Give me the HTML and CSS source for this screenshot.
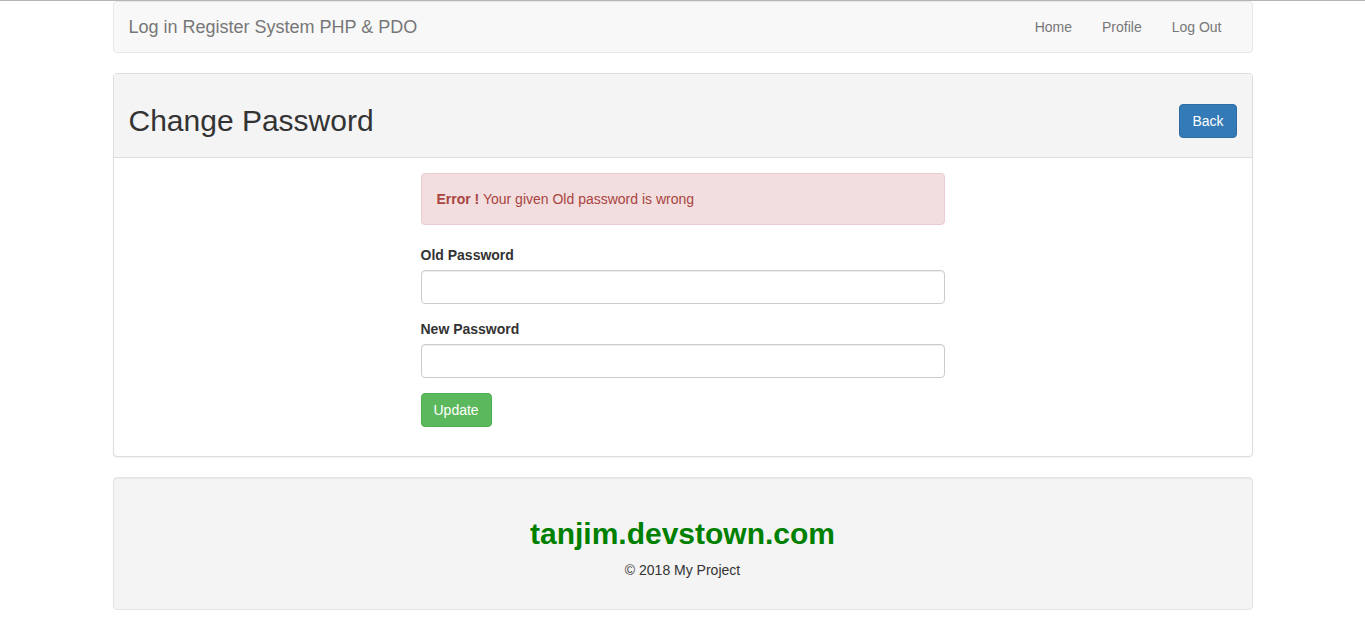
FILE: index.html
```html
<!DOCTYPE html>
<html>
<head>
<meta charset="utf-8">
<title>Change Password</title>
<link rel="stylesheet" href="styles.css">
</head>
<body>
<div class="topline"></div>
<div class="container">
  <nav class="navbar">
    <a class="brand" href="#">Log in Register System PHP &amp; PDO</a>
    <ul class="nav">
      <li><a href="#">Home</a></li>
      <li><a href="#">Profile</a></li>
      <li><a href="#">Log Out</a></li>
    </ul>
  </nav>

  <div class="panel">
    <div class="panel-heading">
      <h2 class="title">Change Password</h2>
      <a class="btn btn-primary" href="#">Back</a>
    </div>
    <div class="panel-body">
      <form class="form">
        <div class="alert"><strong>Error !</strong> Your given Old password is wrong</div>
        <div class="form-group">
          <label>Old Password</label>
          <input class="form-control" type="password">
        </div>
        <div class="form-group">
          <label>New Password</label>
          <input class="form-control" type="password">
        </div>
        <div class="form-group last">
          <button type="button" class="btn btn-success">Update</button>
        </div>
      </form>
    </div>
  </div>

  <div class="well">
    <h2 class="site">tanjim.devstown.com</h2>
    <p class="copy">© 2018 My Project</p>
  </div>
</div>
</body>
</html>
```
FILE: styles.css
```css
* { box-sizing: border-box; }
html, body { margin: 0; padding: 0; }
body {
  font-family: "Liberation Sans", Arial, sans-serif;
  font-size: 14px;
  line-height: 20px;
  color: #333;
  background: #fff;
}
.topline { height: 1px; background: #b4b4b4; }
.container {
  width: 1140px;
  margin: 0 auto;
}
.navbar {
  display: flex;
  justify-content: space-between;
  align-items: center;
  height: 52px;
  background: #f8f8f8;
  border: 1px solid #e7e7e7;
  border-radius: 4px;
  margin-bottom: 20px;
}
.brand {
  font-size: 18px;
  line-height: 20px;
  color: #777;
  text-decoration: none;
  padding: 15px;
}
.nav {
  list-style: none;
  margin: 0 15px 0 0;
  padding: 0;
  display: flex;
}
.nav a {
  display: block;
  padding: 15px;
  color: #777;
  text-decoration: none;
  line-height: 20px;
}
.panel {
  border: 1px solid #ddd;
  border-radius: 4px;
  margin-bottom: 20px;
  box-shadow: 0 1px 1px rgba(0,0,0,.05);
  background: #fff;
}
.panel-heading {
  display: flex;
  justify-content: space-between;
  align-items: center;
  padding: 10px 15px;
  background: #f4f4f4;
  border-bottom: 1px solid #ddd;
  border-radius: 3px 3px 0 0;
}
.title {
  font-size: 30px;
  font-weight: 500;
  line-height: 33px;
  margin: 20px 0 10px;
}
.btn {
  display: inline-block;
  padding: 6px 12px;
  font-family: inherit;
  font-size: 14px;
  line-height: 20px;
  border: 1px solid transparent;
  border-radius: 4px;
  color: #fff;
  text-decoration: none;
  cursor: pointer;
}
.btn-primary { background: #337ab7; border-color: #2e6da4; margin-top: 10px; }
.btn-success { background: #5cb85c; border-color: #4cae4c; }
.panel-body { padding: 15px; }
.form { width: 524px; margin: 0 auto; }
.alert {
  padding: 15px;
  border: 1px solid #ebccd1;
  background: #f2dede;
  color: #a94442;
  border-radius: 4px;
  margin-bottom: 20px;
}
.form-group { margin-bottom: 15px; }
.form-group.last { margin-bottom: 14px; }
label {
  display: block;
  font-weight: bold;
  margin-bottom: 5px;
}
.form-control {
  display: block;
  width: 100%;
  height: 34px;
  padding: 6px 12px;
  font-size: 14px;
  border: 1px solid #ccc;
  border-radius: 4px;
  box-shadow: inset 0 1px 1px rgba(0,0,0,.075);
  background: #fff;
}
.well {
  padding: 19px;
  background: #f4f4f4;
  border: 1px solid #e3e3e3;
  border-radius: 4px;
  box-shadow: inset 0 1px 1px rgba(0,0,0,.05);
  text-align: center;
  margin-bottom: 20px;
}
.site {
  color: green;
  font-size: 30px;
  font-weight: bold;
  line-height: 33px;
  margin: 20px 0 10px;
}
.copy { margin: 0 0 10px; }
```
